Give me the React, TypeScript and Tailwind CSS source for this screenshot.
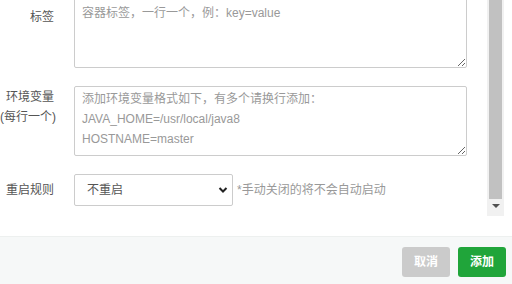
import React from "react";

export default function App() {
  const font = { fontFamily: '"Liberation Sans", "Noto Sans CJK SC", sans-serif' };
  return (
    <div className="w-[512px] h-[284px] flex flex-col bg-white overflow-hidden text-[12px] text-[#555]" style={font}>
      <div className="h-[236px] flex">
        <div className="w-[487px] flex flex-col">
          <div className="flex -mt-[2px]">
            <div className="w-[54px] shrink-0 text-right leading-[20px] pt-[9px]">标签</div>
            <textarea
              className="ml-[20px] w-[393px] h-[70px] border border-[#cccccc] rounded-[2px] px-[7px] pt-[4px] leading-[20px] text-[12px] placeholder:text-[#999] outline-none"
              placeholder="容器标签，一行一个，例：key=value"
              style={font}
            />
          </div>
          <div className="flex mt-[18px]">
            <div className="w-[54px] shrink-0 text-right leading-[20px] pt-[1px] whitespace-nowrap">
              <div>环境变量</div>
              <div className="-mr-[1px]">(每行一个)</div>
            </div>
            <textarea
              className="ml-[20px] w-[393px] h-[70px] border border-[#cccccc] rounded-[2px] px-[7px] pt-[2px] leading-[20px] text-[12px] placeholder:text-[#999] outline-none"
              placeholder={"添加环境变量格式如下，有多个请换行添加：\nJAVA_HOME=/usr/local/java8\nHOSTNAME=master"}
              style={font}
            />
          </div>
          <div className="flex items-center mt-[18px]">
            <div className="w-[54px] shrink-0 text-right leading-[20px]">重启规则</div>
            <div className="relative ml-[20px] w-[159px] h-[32px]">
              <select
                className="appearance-none w-full h-full border border-[#cccccc] rounded-[2px] pl-[12px] text-[12px] text-[#555] bg-white outline-none"
                style={font}
                defaultValue="no"
              >
                <option value="no">不重启</option>
              </select>
              <svg className="absolute right-[5px] top-[12px] pointer-events-none" width="10" height="8" viewBox="0 0 10 8">
                <path d="M1.5 2 L5 5.5 L8.5 2" stroke="#222" strokeWidth="2" fill="none" />
              </svg>
            </div>
            <div className="ml-[4px] text-[#999] whitespace-nowrap">*手动关闭的将不会自动启动</div>
          </div>
        </div>
        <div className="w-[17px] h-[216px] bg-[#f1f1f1] flex flex-col items-center">
          <div className="w-[13px] h-[199px] bg-[#c1c1c1]" />
          <div className="mt-[5px] w-0 h-0 border-l-[4px] border-r-[4px] border-t-[4px] border-l-transparent border-r-transparent border-t-[#505050]" />
        </div>
      </div>
      <div className="flex-1 bg-[#f6f8f8] border-t border-[#edf0ef] flex items-start justify-end pt-[10px] pr-[6px] gap-[8px]">
        <button className="w-[48px] h-[30px] rounded-[3px] bg-[#cbcbcb] text-white font-bold text-[12px]" style={font}>取消</button>
        <button className="w-[48px] h-[30px] rounded-[3px] bg-[#20a53a] text-white font-bold text-[12px]" style={font}>添加</button>
      </div>
    </div>
  );
}
